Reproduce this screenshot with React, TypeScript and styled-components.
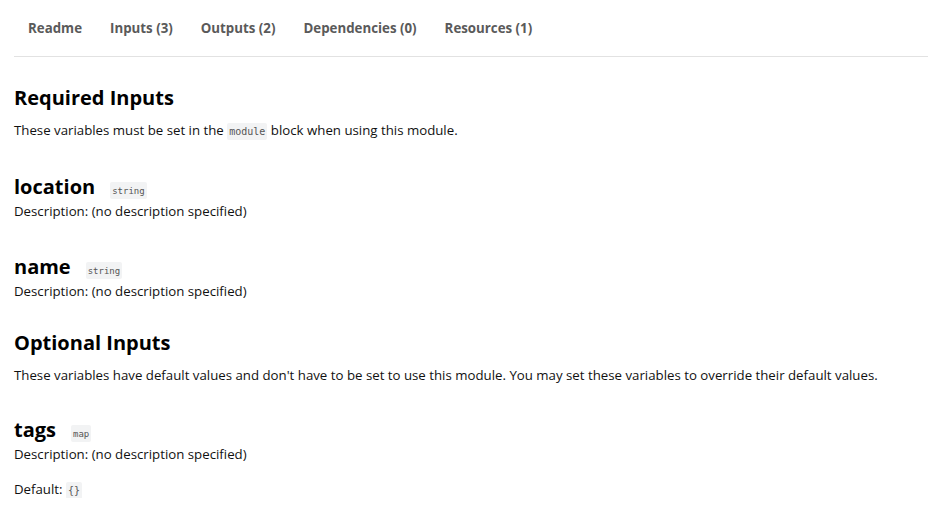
import React from "react";
import styled, { createGlobalStyle } from "styled-components";

const Global = createGlobalStyle`
  html, body { margin: 0; padding: 0; background: #fff; }
  body { font-family: "Open Sans", "Noto Sans", sans-serif; color: #111; }
`;

const Page = styled.div`
  padding: 0 0 0 14px;
`;

const TabBar = styled.nav`
  display: flex;
  height: 56px;
  align-items: center;
  border-bottom: 1px solid #e2e2e2;
`;

const Tab = styled.a`
  font-size: 13.3px;
  font-weight: 700;
  color: #5a5a5a;
  padding: 0 14px;
  text-decoration: none;
`;

const Content = styled.div`
  padding-top: 29px;
`;

const H2 = styled.h2`
  font-size: 20px;
  font-weight: 700;
  margin: 0;
  line-height: 24px;
  color: #000;
`;

const P = styled.p`
  font-size: 13.25px;
  margin: 11px 0 0;
  line-height: 18px;
`;

const Code = styled.code<{ $size?: number }>`
  font-family: "DejaVu Sans Mono", monospace;
  font-size: ${(p) => p.$size ?? 10}px;
  font-weight: 400;
  line-height: 1;
  background: #f2f3f4;
  color: #555;
  padding: 3px 2px;
  border-radius: 2px;
`;

const TypeTag = styled(Code)`
  margin-left: 15px;
  padding: 4px 2px 3px;
`;

const VarBlock = styled.div<{ $top: number }>`
  margin-top: ${(p) => p.$top}px;
`;

const VarName = styled.h3`
  font-size: 20px;
  font-weight: 700;
  margin: 0;
  line-height: 24px;
  color: #000;
`;

const Desc = styled.div`
  font-size: 13.25px;
  line-height: 18px;
  margin-top: 3px;
`;

const Default = styled.div`
  font-size: 13.25px;
  line-height: 18px;
  margin-top: 17px;
`;

export default function App() {
  return (
    <>
      <Global />
      <Page>
        <TabBar>
          <Tab>Readme</Tab>
          <Tab>Inputs (3)</Tab>
          <Tab>Outputs (2)</Tab>
          <Tab>Dependencies (0)</Tab>
          <Tab>Resources (1)</Tab>
        </TabBar>
        <Content>
          <H2>Required Inputs</H2>
          <P>
            These variables must be set in the <Code>module</Code> block when using this module.
          </P>
          <VarBlock $top={36}>
            <VarName>location<TypeTag $size={9}>string</TypeTag></VarName>
            <Desc>Description: (no description specified)</Desc>
          </VarBlock>
          <VarBlock $top={35}>
            <VarName>name<TypeTag $size={9}>string</TypeTag></VarName>
            <Desc>Description: (no description specified)</Desc>
          </VarBlock>
          <VarBlock $top={31}>
            <H2>Optional Inputs</H2>
            <P>
              These variables have default values and don't have to be set to use this module. You may set these variables to override their default values.
            </P>
          </VarBlock>
          <VarBlock $top={34}>
            <VarName>tags<TypeTag $size={9}>map</TypeTag></VarName>
            <Desc>Description: (no description specified)</Desc>
            <Default>Default: <Code>{"{}"}</Code></Default>
          </VarBlock>
        </Content>
      </Page>
    </>
  );
}
